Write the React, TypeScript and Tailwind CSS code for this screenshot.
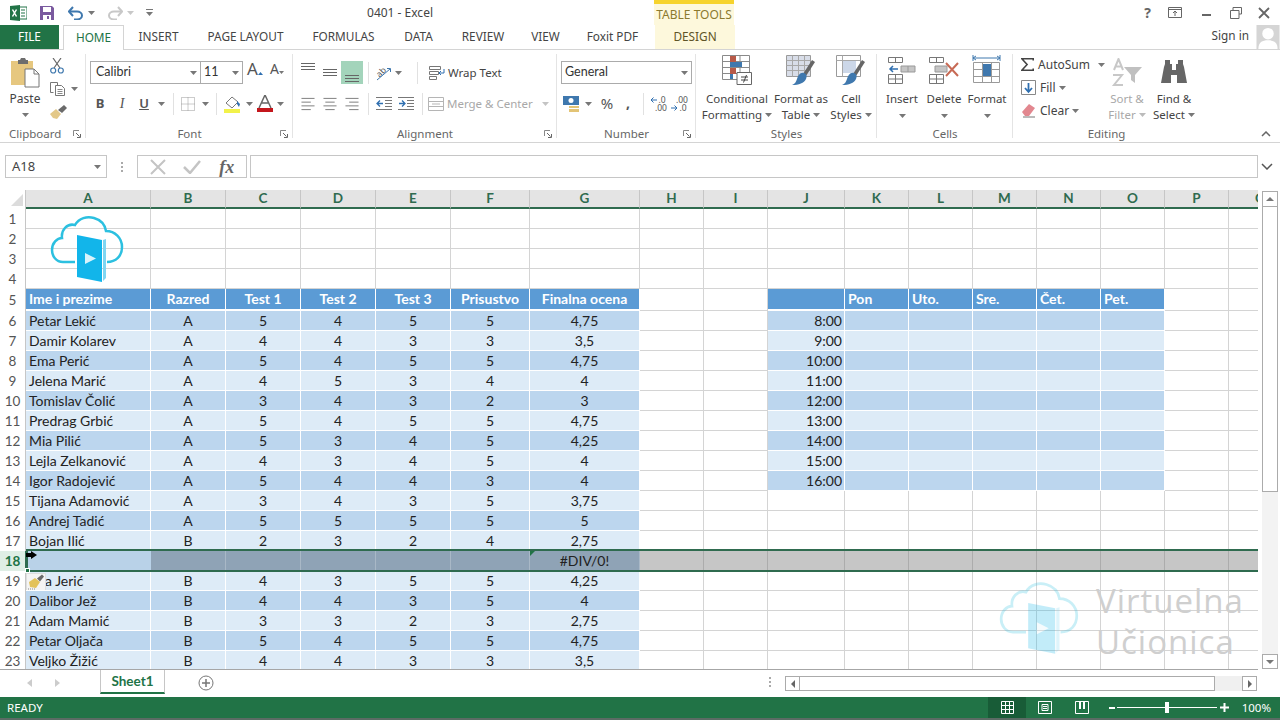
import React from "react";

const UI = { fontFamily: '"Noto Sans", "Open Sans", sans-serif' };
const CELL = { fontFamily: 'Lato, "Noto Sans", sans-serif' };

const colClass = "grid grid-cols-[26px_125px_75px_75px_75px_75px_79px_110px_64px_64px_77px_64px_64px_64px_64px_64px_64px_64px]";
const letters = ["A","B","C","D","E","F","G","H","I","J","K","L","M","N","O","P","Q"];

type R = [number, string, string, string, string, string, string, string];
const data: R[] = [
  [6,"Petar Lekić","A","5","4","5","5","4,75"],
  [7,"Damir Kolarev","A","4","4","3","3","3,5"],
  [8,"Ema Perić","A","5","4","5","5","4,75"],
  [9,"Jelena Marić","A","4","5","3","4","4"],
  [10,"Tomislav Čolić","A","3","4","3","2","3"],
  [11,"Predrag Grbić","A","5","4","5","5","4,75"],
  [12,"Mia Pilić","A","5","3","4","5","4,25"],
  [13,"Lejla Zelkanović","A","4","3","4","5","4"],
  [14,"Igor Radojević","A","5","4","4","3","4"],
  [15,"Tijana Adamović","A","3","4","3","5","3,75"],
  [16,"Andrej Tadić","A","5","5","5","5","5"],
  [17,"Bojan Ilić","B","2","3","2","4","2,75"],
  [18,"","","","","","","#DIV/0!"],
  [19,"a Jerić","B","4","3","5","5","4,25"],
  [20,"Dalibor Jež","B","4","4","3","5","4"],
  [21,"Adam Mamić","B","3","3","2","3","2,75"],
  [22,"Petar Oljača","B","5","4","5","5","4,75"],
  [23,"Veljko Žižić","B","4","4","3","3","3,5"],
];
const times = ["8:00","9:00","10:00","11:00","12:00","13:00","14:00","15:00","16:00"];

function Caret({ c = "#777" }: { c?: string }) {
  return <svg width="7" height="4" viewBox="0 0 7 4" className="shrink-0"><path d="M0 0h7L3.500 4z" fill={c} /></svg>;
}
function Launcher() {
  return (
    <svg width="8" height="8" viewBox="0 0 8 8" className="shrink-0">
      <path d="M.5 6V.5H6" fill="none" stroke="#888" />
      <path d="M3 3l3.500 3.500M7.500 4v3.500H4" fill="none" stroke="#666" />
    </svg>
  );
}
function Sep() {
  return <div className="w-px h-[22px] bg-[#e1e1e1] shrink-0" />;
}
function Lines({ a }: { a: "l" | "c" | "r" }) {
  const d = a === "l" ? "M0 1.500h14M0 5.500h10M0 9.500h14M0 13.500h10" : a === "c" ? "M0 1.500h14M2 5.500h10M0 9.500h14M2 13.500h10" : "M0 1.500h14M4 5.500h10M0 9.500h14M4 13.500h10";
  return <svg width="14" height="14" viewBox="0 0 14 15"><path d={d} stroke="#777" fill="none" /></svg>;
}
function VAlign({ y }: { y: number }) {
  return <svg width="14" height="18" viewBox="0 0 14 18"><path d={`M0 ${y + .5}h14M0 ${y + 3.5}h14M0 ${y + 6.5}h14`} stroke="#666" fill="none" /></svg>;
}
function Group({ w, label, launcher, children, last, left }: { w: string; label: string; launcher?: boolean; children: React.ReactNode; last?: boolean; left?: boolean }) {
  return (
    <div className={`${w} shrink-0 flex flex-col relative`}>
      <div className="h-[76px]">{children}</div>
      <div className={`h-[16px] flex items-center text-[11.5px] text-[#666] relative ${left ? "justify-start pl-[9px]" : "justify-center"}`}>
        {label}
        {launcher && <div className="absolute right-[5px] top-[4px]"><Launcher /></div>}
      </div>
      {!last && <div className="absolute right-0 top-[4px] w-px h-[84px] bg-[#e4e4e4]" />}
    </div>
  );
}
function Big({ w, icon, l1, l2, caretOnly, disabled }: { w: string; icon: React.ReactNode; l1: string; l2?: string; caretOnly?: boolean; disabled?: boolean }) {
  const tc = disabled ? "text-[#a8a8a8]" : "text-[#444]";
  return (
    <div className={`${w} shrink-0 flex flex-col items-center`}>
      <div className="h-[41px] pt-[5px] flex items-start justify-center">{icon}</div>
      <div className={`h-[16px] leading-[16px] text-[11.5px] whitespace-nowrap ${tc}`}>{l1}</div>
      <div className={`h-[16px] leading-[16px] text-[11.5px] whitespace-nowrap flex items-center gap-[3px] ${tc}`}>
        {l2}
        {caretOnly ? <div className="mt-[1px]"><Caret /></div> : <Caret c={disabled ? "#bbb" : "#777"} />}
      </div>
    </div>
  );
}
function Logo({ w = 75, h = 70 }: { w?: number; h?: number }) {
  return (
    <svg width={w} height={h} viewBox="0 0 75 70">
      <path d="M25 48H13C6 48 2 42 2 36C2 29 7 24 12 24C11 16 17 9 25 11C29 4 37 2 44 4C51 6 55 11 56 17C65 17 72 24 72 33C72 42 66 48 57 48" fill="none" stroke="#2cc0e0" strokeWidth="2.500" />
      <path d="M27 21L52 26V68L27 63z" fill="#12b5ea" />
      <path d="M53 26l3-1V64l-3 3z" fill="#7fd6f2" />
      <path d="M35 39l11 5.500L35 50z" fill="#d8f3fb" />
    </svg>
  );
}

function Ribbon() {
  return (
    <div className="h-[93px] flex border-b border-[#d4d4d4] bg-white text-[#444] relative">
      {/* Clipboard */}
      <Group w="w-[86px]" label="Clipboard" launcher left>
        <div className="flex h-full">
          <div className="w-[50px] flex flex-col items-center">
            <div className="h-[41px] pt-[7px]">
              <svg width="30" height="31" viewBox="0 0 30 31">
                <path d="M1 4h22v24H1z" fill="#e6c77f" />
                <path d="M8 3h2l1-2h4l1 2h2v4H8z" fill="#6d6d6d" />
                <path d="M15 12h9l5 5v13H15z" fill="#fff" stroke="#777" />
                <path d="M24 12v5h5" fill="none" stroke="#777" />
              </svg>
            </div>
            <div className="text-[12px] leading-[16px] h-[16px]">Paste</div>
            <div className="h-[16px] flex items-center"><Caret /></div>
          </div>
          <div className="flex flex-col items-start pt-[4px]">
            <div className="h-[23px] flex items-center">
              <svg width="14" height="16" viewBox="0 0 14 16">
                <path d="M3 0l7 10M11 0L4 10" stroke="#666" strokeWidth="1.200" fill="none" />
                <circle cx="3.200" cy="12.500" r="2.500" fill="none" stroke="#3f78ae" strokeWidth="1.200" />
                <circle cx="10.800" cy="12.500" r="2.500" fill="none" stroke="#3f78ae" strokeWidth="1.200" />
              </svg>
            </div>
            <div className="h-[23px] flex items-center gap-[6px]">
              <svg width="15" height="14" viewBox="0 0 15 14">
                <path d="M.5.500h7l0 3M.5.500v10h3" fill="none" stroke="#777" />
                <path d="M5.500 3.500h6l3 3v7h-9z" fill="#fff" stroke="#777" />
                <path d="M7.500 7.500h5M7.500 9.500h5M7.500 11.500h5" stroke="#888" />
              </svg>
              <Caret />
            </div>
            <div className="h-[23px] flex items-center">
              <svg width="17" height="14" viewBox="0 0 17 14">
                <path d="M0 9l6-5 5 5-4 5-4-1z" fill="#e3c888" />
                <path d="M8 5l6-5 3 3-5 5z" fill="#6a6a6a" />
              </svg>
            </div>
          </div>
        </div>
      </Group>

      {/* Font */}
      <Group w="w-[207px]" label="Font" launcher>
        <div className="pt-[11px] pl-[4px]">
          <div className="flex items-center h-[23px]">
            <div className="w-[111px] h-[23px] border border-[#ababab] flex items-center justify-between px-[5px] pr-[3px]">
              <span className="text-[12.5px] text-[#333]" style={CELL}>Calibri</span>
              <Caret />
            </div>
            <div className="w-[42px] h-[23px] border border-l-0 border-[#ababab] flex items-center justify-between pl-[3px] pr-[3px]">
              <span className="text-[12.5px] text-[#333]" style={CELL}>11</span>
              <Caret />
            </div>
            <div className="w-[22px] flex justify-center ml-[1px] items-baseline">
              <span className="text-[17px] leading-none text-[#555]">A</span><svg width="5" height="3" viewBox="0 0 5 3" className="mb-[10px]"><path d="M0 3l2.500-3L5 3z" fill="#2f6fb0" /></svg>
            </div>
            <div className="w-[22px] flex justify-center items-baseline">
              <span className="text-[14px] leading-none text-[#555]">A</span><svg width="5" height="3" viewBox="0 0 5 3" className="mb-[9px]"><path d="M0 0l2.500 3L5 0z" fill="#777" /></svg>
            </div>
          </div>
          <div className="flex items-center h-[23px] mt-[8px]">
            <div className="w-[20px] text-center text-[13px] font-bold text-[#555]">B</div>
            <div className="w-[24px] text-center text-[14px] italic text-[#555]" style={{ fontFamily: '"Liberation Serif", serif' }}>I</div>
            <div className="w-[20px] text-center text-[13px] font-semibold underline text-[#555]">U</div>
            <div className="w-[15px] flex justify-center"><Caret /></div>
            <div className="w-[8px] flex justify-center"><Sep /></div>
            <div className="w-[22px] flex justify-center">
              <svg width="14" height="14" viewBox="0 0 14 14"><path d="M.5.500h13v13H.5zM7 .5v13M.5 7h13" fill="none" stroke="#999" strokeDasharray="1 1" /></svg>
            </div>
            <div className="w-[13px] flex justify-center"><Caret /></div>
            <div className="w-[8px] flex justify-center"><Sep /></div>
            <div className="w-[22px] flex justify-center ml-[1px]">
              <svg width="18" height="18" viewBox="0 0 18 18">
                <path d="M3 8l6-6 6 5-6 6z" fill="#fff" stroke="#777" />
                <path d="M14 6l3 3-1 3-2-3z" fill="#2f6fb0" />
                <path d="M1 14h16v4H1z" fill="#f2f24a" />
              </svg>
            </div>
            <div className="w-[12px] flex justify-center"><Caret /></div>
            <div className="w-[20px] flex justify-center">
              <svg width="16" height="17" viewBox="0 0 16 17">
                <path d="M2 13L8 0l6 13M4.500 8h7" fill="none" stroke="#666" strokeWidth="1.500" />
                <path d="M0 13h16v4H0z" fill="#c4161c" />
              </svg>
            </div>
            <div className="w-[11px] flex justify-center"><Caret /></div>
          </div>
        </div>
      </Group>

      {/* Alignment */}
      <Group w="w-[264px]" label="Alignment" launcher>
        <div className="pt-[11px] pl-[4px]">
          <div className="flex items-center h-[23px]">
            <div className="w-[22px] h-[23px] flex justify-center items-start"><VAlign y={2} /></div>
            <div className="w-[22px] h-[23px] flex justify-center items-center"><VAlign y={5} /></div>
            <div className="w-[22px] h-[23px] bg-[#a3d4bb] flex justify-center items-end"><VAlign y={9} /></div>
            <div className="w-[10px] flex justify-center"><Sep /></div>
            <div className="w-[18px] flex justify-center">
              <svg width="17" height="17" viewBox="0 0 17 17" className="overflow-visible">
                <text x="2" y="11" fontSize="8.500" fill="#555" transform="rotate(-45 7 8)" fontFamily="Noto Sans, sans-serif">ab</text>
                <path d="M3 16L16 5M13 4.500h3.500V8" fill="none" stroke="#3f78ae" />
              </svg>
            </div>
            <div className="w-[14px] flex justify-center"><Caret /></div>
            <div className="w-[24px] flex justify-center"><Sep /></div>
            <div className="w-[16px] flex justify-center">
              <svg width="16" height="14" viewBox="0 0 16 14"><path d="M.5.500h11v3H.5zM.5 5.500h9v3H.5zM.5 10.500h7v3H.5z" fill="none" stroke="#777" /><path d="M15 3v4h-5M12 5l-2 2 2 2" fill="none" stroke="#2f6fb0" /></svg>
            </div>
            <span className="text-[11.5px] ml-[3px] whitespace-nowrap">Wrap Text</span>
          </div>
          <div className="flex items-center h-[23px] mt-[8px]">
            <div className="w-[22px] flex justify-center"><Lines a="l" /></div>
            <div className="w-[22px] flex justify-center"><Lines a="c" /></div>
            <div className="w-[22px] flex justify-center"><Lines a="r" /></div>
            <div className="w-[10px] flex justify-center"><Sep /></div>
            <div className="w-[22px] flex justify-center">
              <svg width="16" height="13" viewBox="0 0 16 13"><path d="M9 3.500h7M9 6.500h7M9 9.500h7M0 12.500h16M0 .5h16" stroke="#777" fill="none" /><path d="M7 6.500H1M4 3.500l-3 3 3 3" stroke="#2f6fb0" fill="none" strokeWidth="1.300" /></svg>
            </div>
            <div className="w-[22px] flex justify-center">
              <svg width="16" height="13" viewBox="0 0 16 13"><path d="M9 3.500h7M9 6.500h7M9 9.500h7M0 12.500h16M0 .5h16" stroke="#777" fill="none" /><path d="M1 6.500h6M4 3.500l3 3-3 3" stroke="#2f6fb0" fill="none" strokeWidth="1.300" /></svg>
            </div>
            <div className="w-[10px] flex justify-center"><Sep /></div>
            <div className="w-[16px] flex justify-center ml-[1px]">
              <svg width="16" height="14" viewBox="0 0 16 14"><path d="M.5.500h15v13H.5zM.5 4.500h15M.5 9.500h15M4 7h8" fill="none" stroke="#b5b5b5" /></svg>
            </div>
            <span className="text-[11.5px] ml-[3px] text-[#a8a8a8] whitespace-nowrap">Merge &amp; Center</span>
            <div className="ml-[9px]"><Caret c="#c4c4c4" /></div>
          </div>
        </div>
      </Group>

      {/* Number */}
      <Group w="w-[139px]" label="Number" launcher>
        <div className="pt-[11px] pl-[4px]">
          <div className="w-[131px] h-[23px] border border-[#ababab] flex items-center justify-between pl-[3px] pr-[3px]">
            <span className="text-[12.5px] text-[#333]" style={CELL}>General</span>
            <Caret />
          </div>
          <div className="flex items-center h-[23px] mt-[8px]">
            <div className="w-[22px] flex justify-center">
              <svg width="18" height="16" viewBox="0 0 18 16"><path d="M0 0h16v9H0z" fill="#3f78ae" /><circle cx="8" cy="4.500" r="2.500" fill="#fff" /><path d="M6 10h10v2H6zM6 13h10v3H6z" fill="#e3c475" /></svg>
            </div>
            <div className="w-[10px] flex justify-center"><Caret /></div>
            <div className="w-[22px] text-center text-[15px] ml-[3px] text-[#555]">%</div>
            <div className="w-[20px] text-center text-[14px] font-bold text-[#555] -mt-[3px]">,</div>
            <div className="w-[10px] flex justify-center"><Sep /></div>
            <div className="w-[20px] flex flex-col items-center text-[8.5px] leading-[8px] text-[#555]">
              <div className="flex items-center h-[8px]">
                <svg width="7" height="6" viewBox="0 0 7 6" className="mr-[1px]"><path d="M7 3H1M3.500.5L1 3l2.500 2.500" stroke="#2f6fb0" fill="none" /></svg>
                <span>.0</span>
              </div>
              <span className="h-[8px] pl-[6px]">.00</span>
            </div>
            <div className="w-[22px] flex flex-col items-center text-[8.5px] leading-[8px] text-[#555]">
              <span className="h-[8px] pl-[6px]">.00</span>
              <div className="flex items-center h-[8px]">
                <svg width="7" height="6" viewBox="0 0 7 6" className="mr-[1px]"><path d="M0 3h6M3.500.5L6 3 3.500 5.500" stroke="#2f6fb0" fill="none" /></svg>
                <span>.0</span>
              </div>
            </div>
          </div>
        </div>
      </Group>

      {/* Styles */}
      <Group w="w-[181px]" label="Styles">
        <div className="flex pl-[4px]">
          <Big w="w-[74px]" l1="Conditional" l2="Formatting" icon={
            <svg width="30" height="30" viewBox="0 0 30 30">
              <path d="M.5.500h27v24H.5zM9 .5v24M18 .5v24M.5 6.500h27M.5 12.500h27M.5 18.500h27" fill="#fff" stroke="#8a8a8a" />
              <path d="M8 1h6v6H8z" fill="#b85a48" /><path d="M8 7h12v5H8z" fill="#3f78ae" /><path d="M8 13h6v6H8z" fill="#b85a48" /><path d="M8 19h3v5H8z" fill="#3f78ae" />
              <path d="M15 17.500h14.500v12H15z" fill="#fff" stroke="#666" />
              <path d="M19 22h7M19 25h7M24.500 20l-3 7.500" stroke="#444" fill="none" />
            </svg>
          } />
          <Big w="w-[54px]" l1="Format as" l2="Table" icon={
            <svg width="30" height="31" viewBox="0 0 30 31">
              <path d="M.5.500h24v21H.5z" fill="#d8dde8" stroke="#9a9a9a" />
              <path d="M.5 5.500h24M.5 10.500h24M.5 15.500h24M6.500.5v21M12.500.5v21M18.500.5v21" stroke="#a8a8a8" fill="none" />
              <path d="M29 7l-9 14-3-2 9-14z" fill="#666" />
              <path d="M18 18c3 1 3 4 2 6-2 4-7 6-14 6 3-1 4-3 5-6s3-7 7-6z" fill="#3f78ae" />
            </svg>
          } />
          <Big w="w-[46px]" l1="Cell" l2="Styles" icon={
            <svg width="30" height="31" viewBox="0 0 30 31">
              <path d="M.5.500h24v21H.5z" fill="#fff" stroke="#9a9a9a" />
              <path d="M6 6h14v12H6z" fill="#ccd7e8" />
              <path d="M.5 5.500h24M6.500.5v21" stroke="#a8a8a8" fill="none" />
              <path d="M29 7l-9 14-3-2 9-14z" fill="#666" />
              <path d="M18 18c3 1 3 4 2 6-2 4-7 6-14 6 3-1 4-3 5-6s3-7 7-6z" fill="#3f78ae" />
            </svg>
          } />
        </div>
      </Group>

      {/* Cells */}
      <Group w="w-[136px]" label="Cells">
        <div className="flex pl-[4px]">
          <Big w="w-[42px]" l1="Insert" caretOnly icon={
            <svg width="28" height="28" viewBox="0 0 28 28" className="mt-[2px]">
              <path d="M.5.500h14v5H.5zM7.500.5v5M.5 17.500h14v9H.5zM.5 22h14M7.500 17.500v9" fill="none" stroke="#777" />
              <path d="M13 9h14v6H13zM20 9v6" fill="#c5c5c5" stroke="#999" />
              <path d="M10 12H2M5 9l-3 3 3 3" fill="none" stroke="#2f6fb0" strokeWidth="1.500" />
            </svg>
          } />
          <Big w="w-[42px]" l1="Delete" caretOnly icon={
            <svg width="30" height="28" viewBox="0 0 30 28" className="mt-[2px]">
              <path d="M.5.500h14v5H.5zM7.500.5v5M.5 17.500h14v9H.5zM.5 22h14M7.500 17.500v9" fill="none" stroke="#777" />
              <path d="M6 9h12v6H6z" fill="#c5c5c5" stroke="#999" />
              <path d="M17 6l12 13M29 6L17 19" stroke="#c76a55" strokeWidth="2" fill="none" />
            </svg>
          } />
          <Big w="w-[44px]" l1="Format" caretOnly icon={
            <svg width="30" height="32" viewBox="0 0 30 32" className="-mt-[1px]">
              <path d="M1 1v6M28 1v6M1 4h27M4 2L1 4l3 2M25 2l3 2-3 2" fill="none" stroke="#3f78ae" />
              <path d="M1.500 8.500h26v20H1.500zM10.500 8.500v20M19.500 8.500v20M1.500 15.500h26M1.500 22.500h26" fill="#fff" stroke="#9a9a9a" />
              <path d="M11 10h8v12h-8z" fill="#3f78ae" />
            </svg>
          } />
        </div>
      </Group>

      {/* Editing */}
      <Group w="w-[187px]" label="Editing" last>
        <div className="flex">
          <div className="w-[92px] shrink-0 pt-[3px] pl-[8px]">
            <div className="h-[23px] flex items-center text-[12px] whitespace-nowrap">
              <svg width="15" height="15" viewBox="0 0 15 15"><path d="M14 3V1H1l6 6.500L1 14h13v-2" fill="none" stroke="#444" strokeWidth="1.800" /></svg>
              <span className="ml-[4px]">AutoSum</span>
              <div className="ml-[8px]"><Caret /></div>
            </div>
            <div className="h-[23px] flex items-center text-[12px]">
              <svg width="15" height="15" viewBox="0 0 15 15"><path d="M.5.500h14v14H.5z" fill="#fff" stroke="#888" /><path d="M7.500 3v9M4 8l3.500 4L11 8" fill="none" stroke="#2f6fb0" strokeWidth="1.800" /></svg>
              <span className="ml-[4px]">Fill</span>
              <div className="ml-[3px]"><Caret /></div>
            </div>
            <div className="h-[23px] flex items-center text-[12px]">
              <svg width="15" height="15" viewBox="0 0 15 15"><path d="M1 9l7-8 6 4-6 8H4z" fill="#e2878f" /><path d="M2 14h12" stroke="#777" /></svg>
              <span className="ml-[4px]">Clear</span>
              <div className="ml-[3px]"><Caret /></div>
            </div>
          </div>
          <Big w="w-[44px]" l1="Sort &" l2="Filter" disabled icon={
            <svg width="32" height="29" viewBox="0 0 32 29" className="mt-[3px]">
              <path d="M3 12L7.500 1 12 12M4.500 8.500h6" fill="none" stroke="#c8c8c8" strokeWidth="2" />
              <path d="M2 17h9l-8 10h9" fill="none" stroke="#c8c8c8" strokeWidth="2" />
              <path d="M13 9h18l-7 8v8l-4-3v-5z" fill="#c0c0c0" />
            </svg>
          } />
          <Big w="w-[50px]" l1="Find &" l2="Select" icon={
            <svg width="26" height="24" viewBox="0 0 26 24" className="mt-[5px]">
              <path d="M4 0h5v4h2v6h4V4h2V0h5v4l1 3 3 16h-10V15h-6v8H0L3 7l1-3z" fill="#666" />
            </svg>
          } />
        </div>
      </Group>
      <div className="absolute right-[9px] bottom-[5px]">
        <svg width="10" height="6" viewBox="0 0 10 6"><path d="M1 5l4-4 4 4" fill="none" stroke="#666" strokeWidth="1.500" /></svg>
      </div>
    </div>
  );
}

function HeaderCell({ l }: { l: string }) {
  return (
    <div className="h-[19px] bg-[#e4e4e4] border-r border-[#c6c6c6] border-b-2 border-b-[#2f6b4f] flex items-center justify-center text-[13.5px] font-bold text-[#2f6b4f] overflow-hidden">
      {l}
    </div>
  );
}
function RowNum({ n, h = "h-[20px]", active }: { n: number; h?: string; active?: boolean }) {
  return (
    <div className={`${h} border-r flex items-center justify-center text-[13.5px] ${active ? "bg-[#dfeee5] text-[#217346] font-bold border-[#2f6b4f]" : "bg-white text-[#555] border-[#c6c6c6]"}`}>
      {n}
    </div>
  );
}
function Empty({ h = "h-[20px]" }: { h?: string }) {
  return <div className={`${h} bg-white border-r border-b border-[#d4d4d4]`} />;
}
function THead({ t, center }: { t: string; center?: boolean }) {
  return (
    <div className="h-[22px] bg-white border-r border-[#fff] pb-[2px]">
      <div className={`h-[20px] bg-[#5b9bd5] text-white font-bold text-[14px] leading-[20px] pl-[3px] ${center ? "text-center pr-[3px]" : ""}`}>{t}</div>
    </div>
  );
}

function Sheet() {
  const cols = [0, 1, 2, 3, 4, 5, 6];
  return (
    <div className={`${colClass} w-[1258px] h-[480px] overflow-hidden border-b border-[#a6a6a6] content-start relative text-[14px] text-[#222]`} style={CELL}>
      <div className="h-[19px] bg-white border-r border-[#c6c6c6] relative">
        <svg width="12" height="12" viewBox="0 0 12 12" className="absolute right-[2px] bottom-[3px]"><path d="M12 0v12H0z" fill="#dcdcdc" /></svg>
      </div>
      {letters.map((l) => <HeaderCell key={l} l={l} />)}

      {[1, 2, 3, 4].map((n) => (
        <React.Fragment key={n}>
          <RowNum n={n} />
          {letters.map((l) => <Empty key={l} />)}
        </React.Fragment>
      ))}

      <RowNum n={5} h="h-[22px]" />
      <THead t="Ime i prezime" />
      {["Razred", "Test 1", "Test 2", "Test 3", "Prisustvo", "Finalna ocena"].map((t) => <THead key={t} t={t} center />)}
      <Empty h="h-[22px]" /><Empty h="h-[22px]" />
      <THead t="" />
      {["Pon", "Uto.", "Sre.", "Čet.", "Pet."].map((t) => <THead key={t} t={t} />)}
      <Empty h="h-[22px]" /><Empty h="h-[22px]" />

      {data.map((r) => {
        const [n] = r;
        const sel = n === 18;
        const band = n % 2 === 0 ? "bg-[#bcd6ee]" : "bg-[#ddebf7]";
        const cellBase = "h-[20px] border-r border-b border-white leading-[19px] whitespace-nowrap overflow-hidden";
        return (
          <React.Fragment key={n}>
            <RowNum n={n} active={sel} />
            {cols.map((i) => {
              const v = r[i + 1] as string;
              if (i === 0) {
                if (sel) {
                  return (
                    <div key={i} className="h-[20px] bg-[#b9d2e8] relative">
                      <div className="absolute left-0 -top-[2px] w-[1233px] h-[23px] border-y-2 border-[#2f6b4f] z-10 pointer-events-none" />
                      <div className="absolute left-0 -top-[2px] w-[2px] h-[23px] bg-[#2f6b4f] z-10" />
                      <div className="absolute -left-[1px] top-[17px] w-[5px] h-[5px] bg-[#217346] border border-white z-20" />
                      <svg width="11" height="8" viewBox="0 0 11 8" className="absolute left-0 top-0 z-30"><path d="M0 2h5V0l6 4-6 4V6H0z" fill="#000" /></svg>
                    </div>
                  );
                }
                return (
                  <div key={i} className={`${cellBase} ${band} ${n === 19 ? "pl-[19px]" : "pl-[3px]"} relative`}>
                    {v}
                    {n === 19 && (
                      <div className="absolute left-0 top-[2px] w-[20px] h-[18px] bg-[#f4f4f4] border border-[#dedede] z-20">
                        <svg width="18" height="16" viewBox="0 0 18 16" className="block"><path d="M2 8l6-4 5 4-4 6-6-1z" fill="#e3c25a" /><path d="M10 4.500l5-4 2 2-4 5z" fill="#6a6a6a" /><path d="M1 15h8" stroke="#888" strokeDasharray="1 1" /></svg>
                      </div>
                    )}
                  </div>
                );
              }
              if (sel) {
                return (
                  <div key={i} className="h-[20px] bg-[#8fa3b6] border-r border-[#a9b8c6] text-center leading-[20px] relative">
                    {v}
                    {i === 6 && <svg width="5" height="5" viewBox="0 0 5 5" className="absolute left-0 top-0"><path d="M0 0h5L0 5z" fill="#217346" /></svg>}
                  </div>
                );
              }
              return <div key={i} className={`${cellBase} ${band} text-center`}>{v}</div>;
            })}
            {[7, 8].map((i) => (
              sel ? <div key={i} className="h-[20px] bg-[#c6c6c6] border-r border-[#acacac]" /> : <Empty key={i} />
            ))}
            {[9, 10, 11, 12, 13, 14].map((i) => {
              if (sel) return <div key={i} className="h-[20px] bg-[#c6c6c6] border-r border-[#acacac]" />;
              if (n <= 14) {
                return (
                  <div key={i} className={`${cellBase} ${band} text-right pr-[2px]`}>
                    {i === 9 ? times[n - 6] : ""}
                  </div>
                );
              }
              return <Empty key={i} />;
            })}
            {[15, 16].map((i) => (
              sel ? <div key={i} className="h-[20px] bg-[#c6c6c6] border-r border-[#acacac]" /> : <Empty key={i} />
            ))}
          </React.Fragment>
        );
      })}

      <div className="absolute left-[50px] top-[24px]"><Logo /></div>

      <div className="absolute left-[999px] top-[390px] opacity-25 pointer-events-none"><Logo w={81} h={76} /></div>
      <div className="absolute left-[1096px] top-[390px] text-[33px] leading-[41px] tracking-[1px] text-[#cfcfcf] pointer-events-none" style={{ fontFamily: '"Open Sans", sans-serif' }}>
        <div>Virtuelna</div>
        <div>Učionica</div>
      </div>
    </div>
  );
}

export default function App() {
  return (
    <div className="w-[1280px] h-[720px] overflow-hidden bg-white flex flex-col" style={UI}>
      {/* Title */}
      <div className="h-[25px] flex items-center shrink-0 relative">
        <div className="w-[10px]" />
        <svg width="17" height="16" viewBox="0 0 17 16" className="shrink-0">
          <path d="M8 2h9v12H8z" fill="#fff" stroke="#217346" />
          <path d="M11 5h4M11 8h4M11 11h4" stroke="#217346" />
          <path d="M0 1l10-1v16L0 15z" fill="#217346" />
          <path d="M2.500 4.500l4 7M6.500 4.500l-4 7" stroke="#fff" strokeWidth="1.500" />
        </svg>
        <div className="w-[13px]" />
        <svg width="14" height="14" viewBox="0 0 14 14" className="shrink-0">
          <path d="M0 0h12l2 2v12H0z" fill="#7a5a9f" /><path d="M3 1h8v5H3z" fill="#fff" /><path d="M3 9h8v5H3z" fill="#fff" /><path d="M7 10h2v3H7z" fill="#7a5a9f" />
        </svg>
        <div className="w-[14px]" />
        <svg width="15" height="14" viewBox="0 0 15 14" className="shrink-0"><path d="M1 5.500h8c3 0 5 2 5 4s-2 4-5 4H6" fill="none" stroke="#3f78ae" strokeWidth="2" /><path d="M5 1L1 5.500 5 10" fill="none" stroke="#3f78ae" strokeWidth="2" /></svg>
        <div className="ml-[5px]"><Caret /></div>
        <div className="w-[13px]" />
        <svg width="15" height="14" viewBox="0 0 15 14" className="shrink-0"><path d="M14 5.500H6c-3 0-5 2-5 4s2 4 5 4h3" fill="none" stroke="#c8c8c8" strokeWidth="2" /><path d="M10 1l4 4.500L10 10" fill="none" stroke="#c8c8c8" strokeWidth="2" /></svg>
        <div className="ml-[4px]"><Caret c="#c8c8c8" /></div>
        <div className="w-[12px]" />
        <svg width="7" height="7" viewBox="0 0 7 7" className="shrink-0"><path d="M0 .5h7" stroke="#777" /><path d="M0 3h7L3.500 7z" fill="#777" /></svg>
        <div className="w-[280px] shrink-0 text-[12px] text-[#444] text-right whitespace-nowrap">0401 - Excel</div>
        <div className="w-[221px] shrink-0" />
        <div className="w-[80px] h-[25px] bg-[#fdf8dc] border-t-4 border-[#f6d32d] text-[12px] text-[#8b7a2e] text-center leading-[21px] shrink-0 whitespace-nowrap">TABLE TOOLS</div>
        <div className="flex-1 flex items-center justify-end pr-[10px] gap-[15px]">
          <span className="text-[14px] font-bold text-[#666] mr-[2px]">?</span>
          <svg width="14" height="11" viewBox="0 0 14 11"><path d="M.5.500h13v10H.5zM.5 2.500h13M7 9V4M5 6l2-2 2 2" fill="none" stroke="#666" /></svg>
          <svg width="12" height="12" viewBox="0 0 12 12" className="ml-[3px]"><path d="M2 8h9" stroke="#666" strokeWidth="2" /></svg>
          <svg width="12" height="12" viewBox="0 0 12 12" className="ml-[3px]"><path d="M3 3V.5h8.500V7H9M.5 3.500H9V11.500H.5z" fill="none" stroke="#666" /></svg>
          <svg width="12" height="12" viewBox="0 0 12 12" className="ml-[1px]"><path d="M1 1l10 10M11 1L1 11" stroke="#666" strokeWidth="1.800" /></svg>
        </div>
      </div>

      {/* Tabs */}
      <div className="h-[25px] flex items-stretch shrink-0 text-[11.8px] text-[#444] whitespace-nowrap border-b border-[#d4d4d4]">
        <div className="w-[59px] bg-[#217346] text-white flex items-center justify-center">FILE</div>
        <div className="w-[4px]" />
        <div className="w-[61px] h-[25px] bg-white border border-b-0 border-[#d4d4d4] text-[#217346] flex items-center justify-center relative z-10">HOME</div>
        <div className="w-[69px] flex items-center justify-center">INSERT</div>
        <div className="w-[105px] flex items-center justify-center">PAGE LAYOUT</div>
        <div className="w-[91px] flex items-center justify-center">FORMULAS</div>
        <div className="w-[59px] flex items-center justify-center">DATA</div>
        <div className="w-[70px] flex items-center justify-center">REVIEW</div>
        <div className="w-[55px] flex items-center justify-center">VIEW</div>
        <div className="w-[79px] flex items-center justify-center">Foxit PDF</div>
        <div className="w-[3px]" />
        <div className="w-[80px] bg-[#fdf8dc] text-[#5f5426] flex items-center justify-center">DESIGN</div>
        <div className="flex-1 flex items-center justify-end">
          <span className="mr-[7px] -mt-[2px]">Sign in</span>
          <svg width="24" height="24" viewBox="0 0 24 25"><path d="M0 0h24v25H0z" fill="#d5d5d5" /><circle cx="12" cy="9" r="6" fill="#fff" /><path d="M2 25c0-7 4-9 10-9s10 2 10 9z" fill="#fff" /></svg>
        </div>
      </div>

      <Ribbon />

      {/* Formula bar */}
      <div className="h-[47px] shrink-0 pt-[12px] flex items-start">
        <div className="ml-[5px] w-[102px] h-[23px] border border-[#c6c6c6] flex items-center justify-between pl-[6px] pr-[5px] text-[13px] text-[#444]">
          A18 <Caret />
        </div>
        <div className="w-[30px] h-[23px] flex items-center justify-center">
          <svg width="2" height="10" viewBox="0 0 2 10"><path d="M0 0h2v2H0zM0 4h2v2H0zM0 8h2v2H0z" fill="#aaa" /></svg>
        </div>
        <div className="w-[110px] h-[23px] border border-[#c6c6c6] flex items-center justify-around px-[3px]">
          <svg width="16" height="16" viewBox="0 0 16 16"><path d="M1 1l14 14M15 1L1 15" stroke="#c4c4c4" strokeWidth="2" /></svg>
          <svg width="18" height="14" viewBox="0 0 18 14"><path d="M1 7l6 6L17 1" stroke="#c4c4c4" strokeWidth="2.500" fill="none" /></svg>
          <span className="text-[18px] leading-none italic font-bold text-[#666]" style={{ fontFamily: '"Liberation Serif", serif' }}>fx</span>
        </div>
        <div className="ml-[3px] w-[1008px] h-[23px] border border-[#c6c6c6]" />
        <div className="w-[18px] h-[23px] flex items-center justify-center">
          <svg width="12" height="7" viewBox="0 0 12 7"><path d="M1 1l5 5 5-5" fill="none" stroke="#555" strokeWidth="1.500" /></svg>
        </div>
      </div>

      {/* Sheet + vertical scrollbar */}
      <div className="h-[480px] flex shrink-0">
        <Sheet />
        <div className="w-[22px] pl-[4px] pt-[1px] flex flex-col">
          <div className="w-[16px] h-[478px] bg-[#f3f3f3] flex flex-col">
            <div className="h-[16px] bg-white border border-[#ababab] flex items-center justify-center">
              <svg width="8" height="4" viewBox="0 0 8 4"><path d="M0 4h8L4 0z" fill="#777" /></svg>
            </div>
            <div className="h-[285px] bg-white border-x border-b border-[#ababab]" />
            <div className="flex-1" />
            <div className="h-[15px] bg-white border border-[#ababab] flex items-center justify-center">
              <svg width="8" height="4" viewBox="0 0 8 4"><path d="M0 0h8L4 4z" fill="#777" /></svg>
            </div>
          </div>
        </div>
      </div>

      {/* Sheet tabs */}
      <div className="h-[27px] shrink-0 flex items-start bg-white">
        <div className="w-[100px] h-[25px] flex items-center">
          <svg width="5" height="8" viewBox="0 0 5 8" className="ml-[27px]"><path d="M5 0v8L0 4z" fill="#ccc" /></svg>
          <svg width="5" height="8" viewBox="0 0 5 8" className="ml-[23px]"><path d="M0 0v8l5-4z" fill="#ccc" /></svg>
        </div>
        <div className="w-[65px] h-[24px] bg-white border-x border-[#c6c6c6] border-b-2 border-b-[#217346] text-[13.5px] font-bold text-[#217346] flex items-center justify-center" style={CELL}>Sheet1</div>
        <div className="ml-[33px] mt-[5px]">
          <svg width="16" height="16" viewBox="0 0 16 16"><circle cx="8" cy="8" r="7" fill="none" stroke="#777" /><path d="M4 8h8M8 4v8" stroke="#777" strokeWidth="1.500" /></svg>
        </div>
        <div className="ml-[555px] mt-[7px] flex">
          <svg width="2" height="10" viewBox="0 0 2 10"><path d="M0 0h2v2H0zM0 4h2v2H0zM0 8h2v2H0z" fill="#aaa" /></svg>
        </div>
        <div className="ml-[14px] mt-[6px] w-[472px] h-[15px] flex bg-[#f0f0f0]">
          <div className="w-[15px] h-[15px] bg-white border border-[#ababab] flex items-center justify-center">
            <svg width="4" height="8" viewBox="0 0 4 8"><path d="M4 0v8L0 4z" fill="#666" /></svg>
          </div>
          <div className="w-[415px] h-[15px] bg-white border-y border-r border-[#ababab]" />
          <div className="flex-1" />
          <div className="w-[15px] h-[15px] bg-white border border-[#ababab] flex items-center justify-center">
            <svg width="4" height="8" viewBox="0 0 4 8"><path d="M0 0v8l4-4z" fill="#666" /></svg>
          </div>
        </div>
      </div>

      {/* Status bar */}
      <div className="h-[21px] shrink-0 bg-[#217346] flex items-stretch text-white text-[11.5px]">
        <div className="pl-[7px] flex items-center w-[988px]">READY</div>
        <div className="w-[38px] bg-[#185c37] flex items-center justify-center">
          <svg width="13" height="13" viewBox="0 0 13 13"><path d="M.5.500h12v12H.5zM4.500.5v12M8.500.5v12M.5 4.500h12M.5 8.500h12" fill="none" stroke="#fff" /></svg>
        </div>
        <div className="w-[37px] flex items-center justify-center">
          <svg width="14" height="13" viewBox="0 0 14 13"><path d="M.5.500h13v12H.5zM4 3.500h6v6H4zM5 5.500h4M5 7.500h4" fill="none" stroke="#fff" /></svg>
        </div>
        <div className="w-[37px] flex items-center justify-center">
          <svg width="14" height="13" viewBox="0 0 14 13"><path d="M.5.500h13v12H.5z" fill="none" stroke="#fff" /><path d="M4 1h2v7H4zM8 1h2v7H8z" fill="#fff" /></svg>
        </div>
        <div className="flex items-center ml-[9px]">
          <div className="w-[6px] h-[2px] bg-white" />
          <div className="w-[100px] h-px bg-white relative ml-[2px]">
            <div className="absolute left-[48px] -top-[5px] w-[4px] h-[11px] bg-white" />
          </div>
          <svg width="9" height="9" viewBox="0 0 9 9" className="ml-[3px]"><path d="M0 4.500h9M4.500 0v9" stroke="#fff" strokeWidth="2" /></svg>
        </div>
        <div className="flex-1 flex items-center justify-end pr-[9px]">100%</div>
      </div>
      <div className="h-[2px] bg-[#5b6b64] shrink-0" />
    </div>
  );
}
